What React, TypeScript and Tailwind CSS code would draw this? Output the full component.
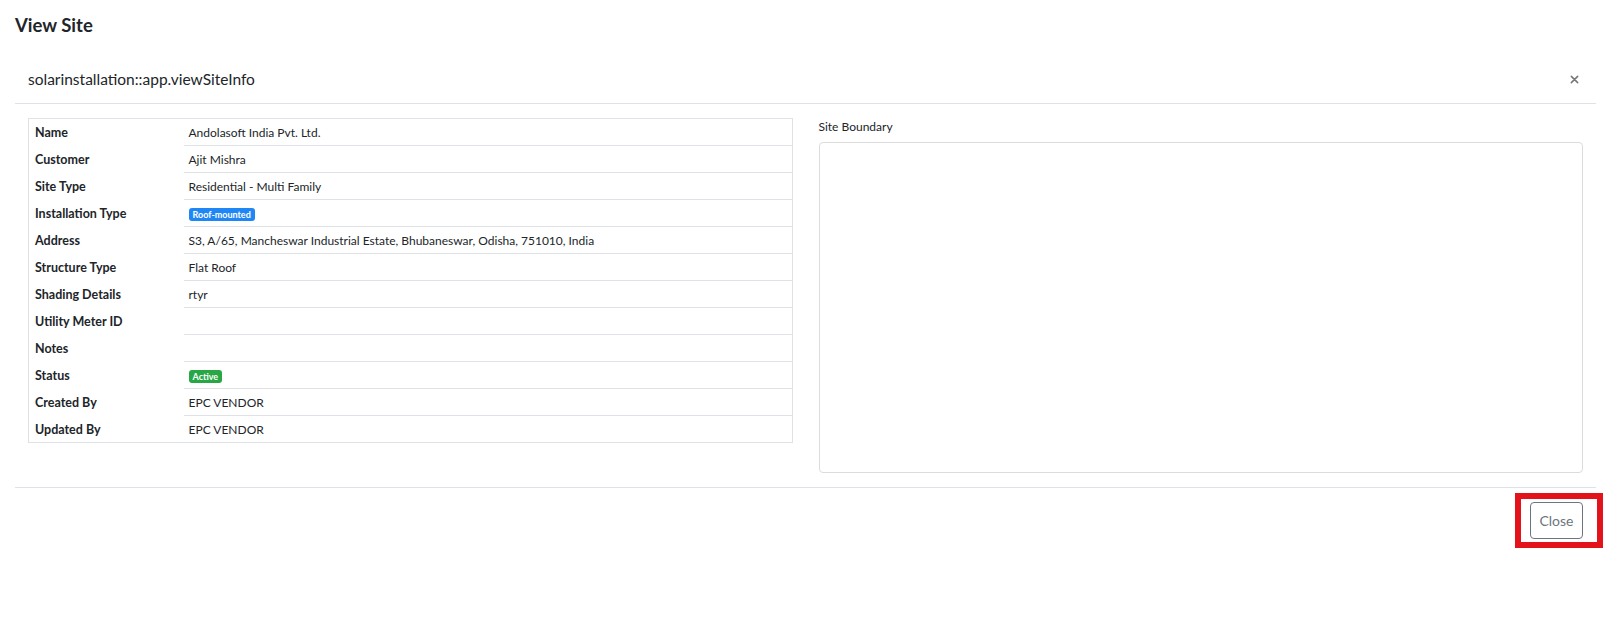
import React from 'react';

type Row = { label: string; value?: string; badge?: 'blue' | 'green' };

const rows: Row[] = [
  { label: 'Name', value: 'Andolasoft India Pvt. Ltd.' },
  { label: 'Customer', value: 'Ajit Mishra' },
  { label: 'Site Type', value: 'Residential - Multi Family' },
  { label: 'Installation Type', value: 'Roof-mounted', badge: 'blue' },
  { label: 'Address', value: 'S3, A/65, Mancheswar Industrial Estate, Bhubaneswar, Odisha, 751010, India' },
  { label: 'Structure Type', value: 'Flat Roof' },
  { label: 'Shading Details', value: 'rtyr' },
  { label: 'Utility Meter ID' },
  { label: 'Notes' },
  { label: 'Status', value: 'Active', badge: 'green' },
  { label: 'Created By', value: 'EPC VENDOR' },
  { label: 'Updated By', value: 'EPC VENDOR' },
];

function Badge({ text, tone }: { text: string; tone: 'blue' | 'green' }) {
  return (
    <span
      className={
        'inline-flex h-[13px] items-center rounded-[3px] px-[4px] text-[9px] font-bold leading-none text-white ' +
        (tone === 'blue' ? 'bg-[#1f87f5]' : 'bg-[#28a745]')
      }
    >
      {text}
    </span>
  );
}

export default function App() {
  return (
    <div className="min-h-[627px] w-full bg-white text-[#212529] font-['Lato',sans-serif]">
      <div className="px-[15px] pt-[13px] text-[18.5px] font-bold leading-[24px]">View Site</div>

      <div className="mx-[15px] mt-[15px]">
        {/* modal header */}
        <div className="flex h-[52px] items-center justify-between border-b border-[#dee2e6] pl-[13px] pr-[17px] pt-[3px]">
          <h5 className="text-[15.5px] leading-[22px]">solarinstallation::app.viewSiteInfo</h5>
          <button className="text-[#777]">
            <svg width="9" height="9" viewBox="0 0 10 10" stroke="currentColor" strokeWidth="1.7" strokeLinecap="round">
              <path d="M1.5 1.5l7 7M8.5 1.5l-7 7" />
            </svg>
          </button>
        </div>

        {/* modal body */}
        <div className="grid grid-cols-2 gap-[26px] px-[13px] pb-[14px] pt-[13px]">
          <div>
            <table className="mt-[1px] w-full border-collapse border border-[#dee2e6] text-[12px]">
              <tbody>
                {rows.map((row, i) => (
                  <tr key={row.label} className="h-[27px]">
                    <th className="w-[155px] pl-[6px] pt-[3px] text-left align-middle text-[12.5px] font-bold">
                      {row.label}
                    </th>
                    <td
                      className={
                        'pl-[5px] pt-[1px] align-middle ' + (i < rows.length - 1 ? 'border-b border-[#dee2e6]' : '')
                      }
                    >
                      {row.badge && row.value ? <Badge text={row.value} tone={row.badge} /> : row.value}
                    </td>
                  </tr>
                ))}
              </tbody>
            </table>
          </div>

          <div>
            <div className="mb-[6px] pt-[1px] text-[12px] leading-[18px]">Site Boundary</div>
            <div className="h-[331px] rounded-[4px] border border-[#dcdcdc]" />
          </div>
        </div>

        {/* modal footer */}
        <div className="flex justify-end border-t border-[#dee2e6] pr-[13px] pt-[14px]">
          <div className="relative">
            <button className="h-[37px] w-[53px] rounded-[4px] border border-[#6c757d] text-[14px] text-[#6c757d]">
              Close
            </button>
            <div className="pointer-events-none absolute -bottom-[9px] -left-[15px] -right-[20px] -top-[9px] border-[6px] border-[#e3131b]" />
          </div>
        </div>
      </div>
    </div>
  );
}
